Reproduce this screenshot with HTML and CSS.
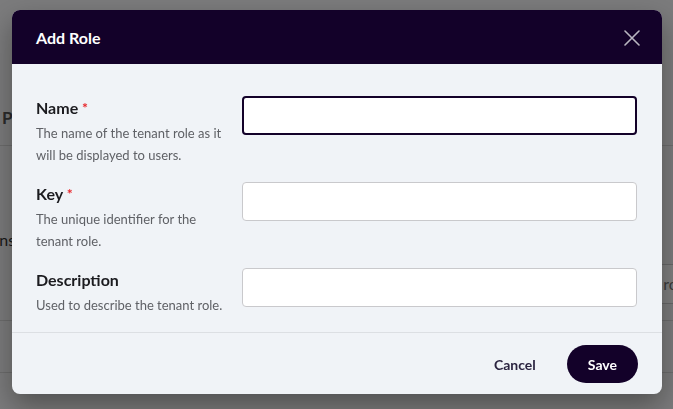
FILE: index.html
```html
<!DOCTYPE html>
<html lang="en">
<head>
<meta charset="utf-8">
<title>Add Role</title>
<link rel="stylesheet" href="styles.css">
</head>
<body>
<div class="page">
  <div class="tabs"><span class="tab">Properties</span></div>
  <div class="section-title">Permissions</div>
  <div class="toolbar"><div class="search">Search roles</div></div>
  <div class="table-row"></div>
  <div class="table-row"></div>
</div>
<div class="overlay"></div>
<div class="modal" role="dialog" aria-labelledby="modal-title">
  <div class="modal-header">
    <h2 id="modal-title" class="modal-title">Add Role</h2>
    <button class="close-btn" aria-label="Close">
      <svg width="16" height="16" viewBox="0 0 16 16" fill="none" stroke="currentColor" stroke-width="1.6" stroke-linecap="round"><path d="M1 1 L15 15 M15 1 L1 15"/></svg>
    </button>
  </div>
  <div class="modal-body">
    <div class="field">
      <div class="field-info">
        <div class="field-label">Name <span class="req">*</span></div>
        <div class="field-desc">The name of the tenant role as it will be displayed to users.</div>
      </div>
      <input class="field-input focused" type="text">
    </div>
    <div class="field">
      <div class="field-info">
        <div class="field-label">Key <span class="req">*</span></div>
        <div class="field-desc">The unique identifier for the tenant role.</div>
      </div>
      <input class="field-input" type="text">
    </div>
    <div class="field">
      <div class="field-info">
        <div class="field-label">Description</div>
        <div class="field-desc">Used to describe the tenant role.</div>
      </div>
      <input class="field-input" type="text">
    </div>
  </div>
  <div class="modal-footer">
    <button class="btn btn-cancel">Cancel</button>
    <button class="btn btn-save">Save</button>
  </div>
</div>
</body>
</html>
```
FILE: styles.css
```css
html, body {
  margin: 0;
  padding: 0;
  height: 100%;
  overflow: hidden;
}
body {
  font-family: Lato, "Noto Sans", sans-serif;
  background: #f7f7f8;
  color: #222;
}
.page {
  display: flex;
  flex-direction: column;
  overflow: hidden;
  height: 100%;
}
.tabs {
  margin-top: 100px;
  height: 45px;
  flex: none;
  border-bottom: 1px solid #d9d9d9;
  display: flex;
  align-items: center;
  padding-left: 2px;
}
.tab {
  font-size: 17px;
  font-weight: 700;
  color: #555;
  margin-top: -10px;
}
.section-title {
  margin-top: 84px;
  margin-left: -68px;
  font-size: 16px;
  color: #333;
  white-space: nowrap;
}
.toolbar {
  margin-top: 15px;
  display: flex;
  justify-content: flex-end;
  margin-right: -120px;
  flex: none;
}
.search {
  width: 180px;
  height: 38px;
  border: 1px solid #cfcfcf;
  border-radius: 4px;
  background: #fff;
  box-sizing: content-box;
  padding-left: 12px;
  line-height: 38px;
  font-size: 16px;
  color: #777;
  white-space: nowrap;
}
.table-row {
  border-bottom: 1px solid #d9d9d9;
  height: 16px;
  flex: none;
}
.table-row + .table-row {
  height: 51px;
}
.overlay {
  position: fixed;
  inset: 0;
  background: rgba(0, 0, 0, 0.5);
}
.modal {
  position: fixed;
  left: 12px;
  top: 10px;
  width: 650px;
  border-radius: 8px;
  overflow: hidden;
  background: #f0f3f7;
  box-shadow: 0 12px 28px rgba(0, 0, 0, 0.35);
}
.modal-header {
  height: 54px;
  background: #130129;
  display: flex;
  align-items: center;
  justify-content: space-between;
  padding: 0 22px 0 24px;
}
.modal-title {
  margin: 0;
  color: #fff;
  font-size: 16px;
  font-weight: 700;
}
.close-btn {
  background: none;
  border: 0;
  padding: 0;
  width: 16px;
  height: 16px;
  color: #b9b6c0;
  display: flex;
  margin-top: 2px;
}
.modal-body {
  padding: 32px 25px 16px 24px;
  display: flex;
  flex-direction: column;
  gap: 16px;
  border-bottom: 1px solid #dcdfe3;
}
.field {
  display: grid;
  grid-template-columns: 190px 1fr;
  column-gap: 16px;
  align-items: start;
}
.field-label {
  font-size: 16px;
  line-height: 24px;
  font-weight: 700;
  color: #1b1b1f;
}
.req {
  color: #e8252a;
  font-size: 14px;
  font-weight: 700;
  vertical-align: 1px;
}
.field-desc {
  margin-top: 2px;
  font-size: 13px;
  line-height: 22px;
  color: #5f6166;
}
.field-input {
  box-sizing: border-box;
  height: 39px;
  width: 100%;
  margin: 0;
  background: #fff;
  border: 1px solid #c9c9cc;
  border-radius: 4px;
  font-family: inherit;
  font-size: 14px;
  padding: 0 12px;
  outline: none;
}
.field-input.focused {
  border: 2px solid #130129;
}
.modal-footer {
  display: flex;
  justify-content: flex-end;
  gap: 10px;
  padding: 12px 24px 11px;
}
.btn {
  height: 38px;
  padding: 0 21px;
  border-radius: 19px;
  border: 0;
  font-family: inherit;
  font-size: 14px;
  font-weight: 700;
  cursor: pointer;
}
.btn-cancel {
  background: transparent;
  color: #2b2440;
}
.btn-save {
  background: #130129;
  color: #fff;
}
```
